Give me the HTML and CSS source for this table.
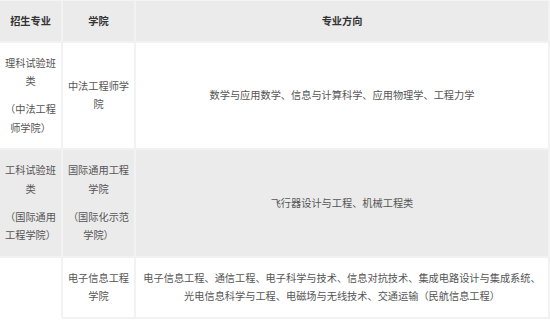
FILE: index.html
```html
<!DOCTYPE html>
<html lang="zh-CN">
<head>
<meta charset="utf-8">
<title>招生专业</title>
<link rel="stylesheet" href="styles.css">
</head>
<body>
<table class="majors">
  <colgroup>
    <col class="c1">
    <col class="c2">
    <col class="c3">
  </colgroup>
  <thead>
    <tr class="head">
      <th>招生专业</th>
      <th>学院</th>
      <th>专业方向</th>
    </tr>
  </thead>
  <tbody>
    <tr class="white">
      <td><p>理科试验班类</p><p>（中法工程师学院）</p></td>
      <td><p>中法工程师学院</p></td>
      <td><p>数学与应用数学、信息与计算科学、应用物理学、工程力学</p></td>
    </tr>
    <tr class="grey">
      <td><p>工科试验班类</p><p>（国际通用工程学院）</p></td>
      <td><p>国际通用工程学院</p><p>（国际化示范学院）</p></td>
      <td><p>飞行器设计与工程、机械工程类</p></td>
    </tr>
    <tr class="white">
      <td class="open"></td>
      <td><p>电子信息工程学院</p></td>
      <td><p>电子信息工程、通信工程、电子科学与技术、信息对抗技术、集成电路设计与集成系统、光电信息科学与工程、电磁场与无线技术、交通运输（民航信息工程）</p></td>
    </tr>
  </tbody>
</table>
</body>
</html>
```
FILE: styles.css
```css
html, body {
  margin: 0;
  padding: 0;
  background: #ffffff;
}

.majors {
  width: 550px;
  table-layout: fixed;
  border-collapse: separate;
  border-spacing: 0;
  border-top: 1px solid #f4f4f4;
  font-family: "Noto Sans CJK SC", "Noto Sans", sans-serif;
  font-size: 10.2px;
  line-height: 18.5px;
  color: #555555;
}

.c1 { width: 63px; }
.c2 { width: 73px; }
.c3 { width: 414px; }

.majors th,
.majors td {
  border-right: 2px solid #f2f2f2;
  border-bottom: 2px solid #f2f2f2;
  text-align: center;
  vertical-align: middle;
  padding: 11px 4px;
}

.majors th {
  background: #ebebeb;
  color: #333333;
  font-weight: bold;
  padding: 11px 4px 10px;
}

.majors td {
  padding: 11px 4px;
}

.grey td {
  background: #ebebeb;
}

.majors td.open {
  border-bottom-color: transparent;
}

.majors p {
  margin: 0;
}

.majors p + p {
  margin-top: 9.5px;
}
```
